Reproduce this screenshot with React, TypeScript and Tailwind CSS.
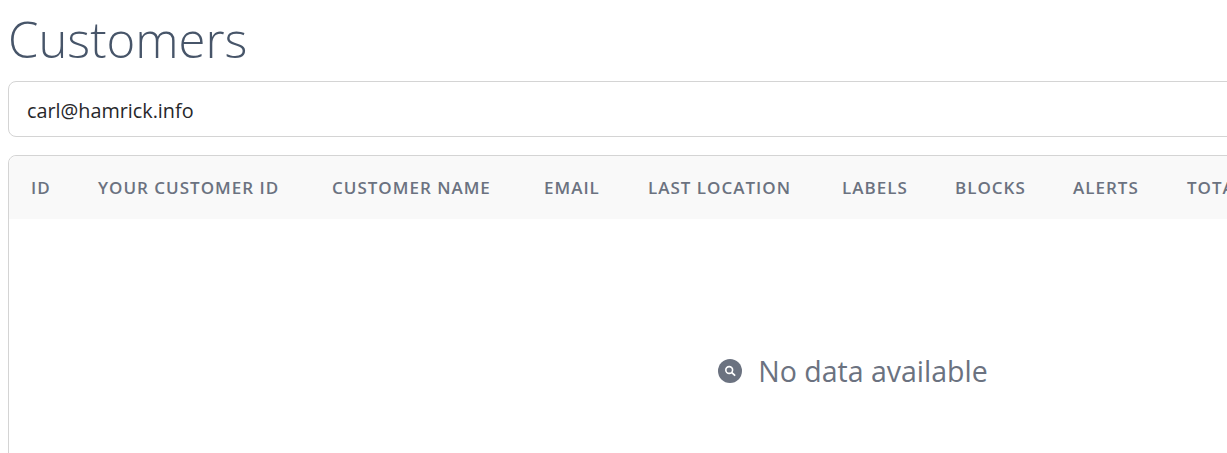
const columns = [
  "ID",
  "Your Customer ID",
  "Customer Name",
  "Email",
  "Last Location",
  "Labels",
  "Blocks",
  "Alerts",
  "Total",
];

function SearchBadge() {
  return (
    <svg width="24" height="24" viewBox="0 0 24 24" className="shrink-0">
      <circle cx="12" cy="12" r="12" fill="#6b7280" />
      <circle cx="11.2" cy="11" r="3.4" fill="none" stroke="#fff" strokeWidth="1.6" />
      <path d="M13.8 13.6 L16.6 16.2" stroke="#fff" strokeWidth="1.8" strokeLinecap="round" />
    </svg>
  );
}

export default function App() {
  return (
    <div className="h-[453px] w-[1227px] overflow-hidden bg-white font-['Open_Sans','Noto_Sans',sans-serif]">
      <div className="w-[1698px] pl-2">
        <h1 className="h-[81px] pt-[5px] text-[49px] leading-[68px] font-light text-[#475569]">
          Customers
        </h1>
        <input
          readOnly
          value="carl@hamrick.info"
          className="mb-[18px] block h-[56px] w-full rounded-lg border border-[#d4d4d4] bg-white px-[18px] pt-[3px] text-[19.8px] text-[#27272a] outline-none"
        />
        <div className="h-[400px] rounded-lg border border-[#d4d4d4]">
          <div className="grid h-[63px] grid-cols-[67px_234px_212px_104px_194px_113px_118px_114px_200px] items-center rounded-t-lg bg-[#f9f9f9] pl-[22px] text-[17px] font-semibold tracking-[1px] whitespace-nowrap text-[#6b7280] uppercase">
            {columns.map((c) => (
              <div key={c}>{c}</div>
            ))}
          </div>
          <div className="flex justify-center pt-[133px]">
            <div className="flex items-center gap-[16px] text-[28.5px] leading-[38px] text-[#6b7280]">
              <SearchBadge />
              <span>No data available</span>
            </div>
          </div>
        </div>
      </div>
    </div>
  );
}
